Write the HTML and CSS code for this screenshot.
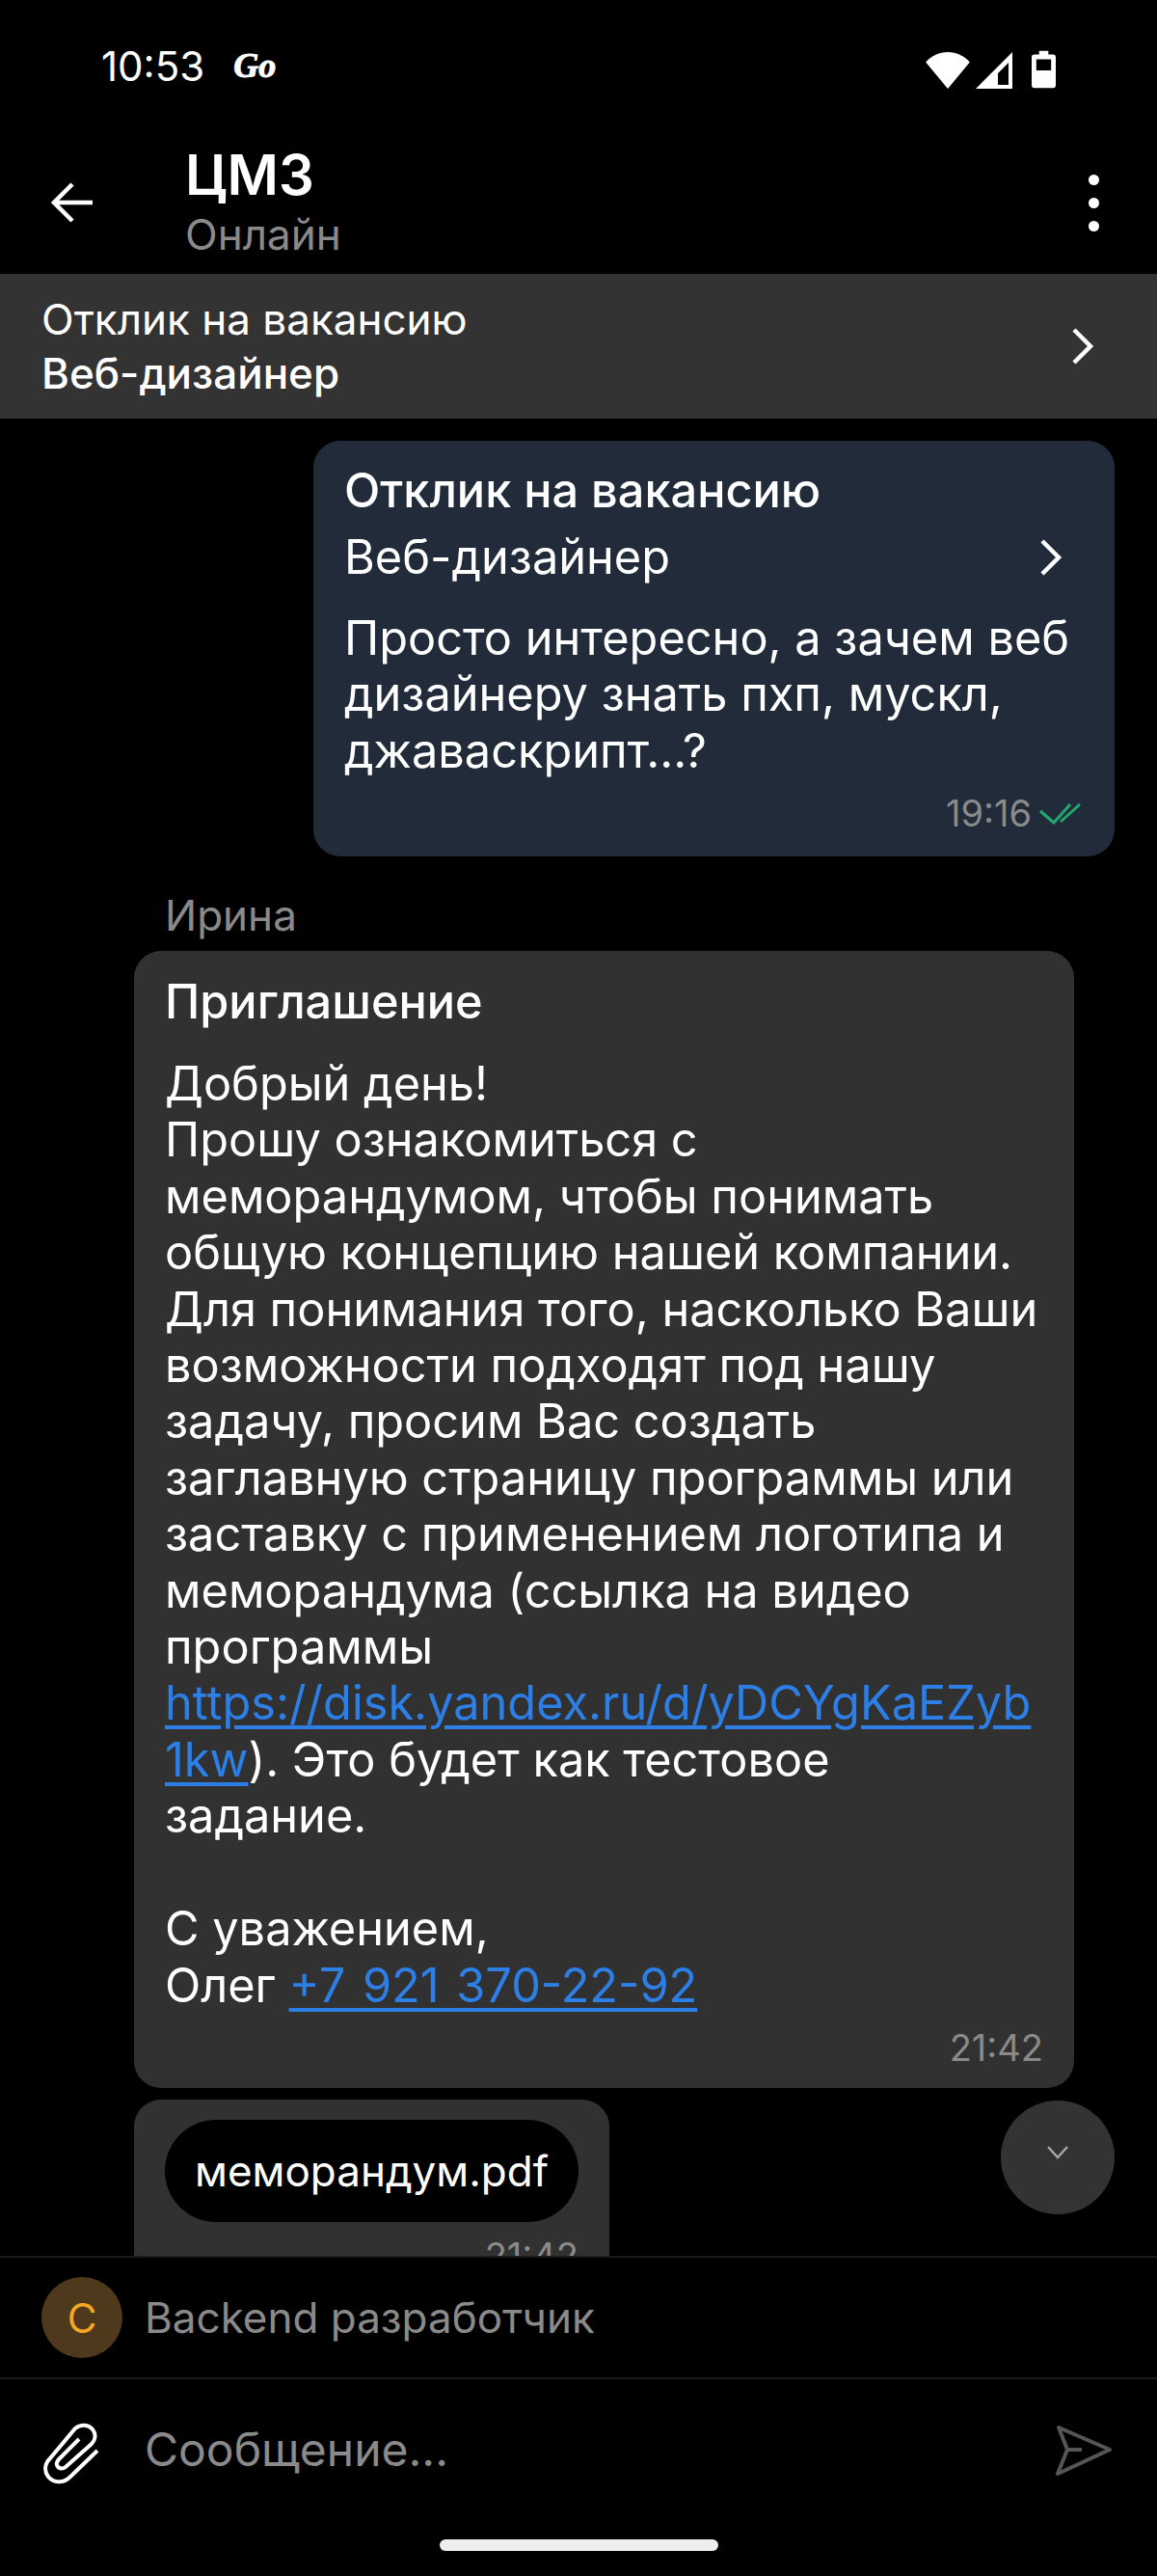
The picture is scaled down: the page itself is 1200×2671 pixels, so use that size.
FILE: index.html
```html
<!DOCTYPE html>
<html lang="ru">
<head>
    <meta charset="UTF-8">
    <meta name="viewport" content="width=device-width, initial-scale=1.0">
    <title>ЦМЗ</title>
    <link rel="stylesheet" href="styles.css">
</head>
<body>
    <div class="status-bar">
        <div class="status-left">
            <span class="status-time">10:53</span>
            <span class="status-go">Go</span>
        </div>
        <div class="status-icons">
            <svg class="icon-wifi" viewBox="0 0 48 40"><path d="M0 11C6 4 15 0 24 0s18 4 24 11L24 40z" fill="#fff"/></svg>
            <svg class="icon-signal" viewBox="0 0 38 38"><path fill-rule="evenodd" d="M38 0v38H0zM34 11 23 22v12h11z" fill="#fff"/></svg>
            <svg class="icon-battery" viewBox="0 0 26 40"><path fill-rule="evenodd" d="M8 0h10v4h5a3 3 0 0 1 3 3v30a3 3 0 0 1-3 3H3a3 3 0 0 1-3-3V7a3 3 0 0 1 3-3h5zM5 9v12h16V9z" fill="#fff"/></svg>
        </div>
    </div>

    <header class="top-bar">
        <svg class="icon-back" viewBox="0 0 44 44"><path d="M44 22H4M23 3 4 22l19 19" fill="none" stroke="#fff" stroke-width="4.5"/></svg>
        <div class="top-titles">
            <div class="top-name">ЦМЗ</div>
            <div class="top-online">Онлайн</div>
        </div>
        <div class="dots"><i></i><i></i><i></i></div>
    </header>

    <div class="vacancy-bar">
        <div>
            <div class="vacancy-line">Отклик на вакансию</div>
            <div class="vacancy-line vacancy-name">Веб-дизайнер</div>
        </div>
        <svg class="icon-chevron" viewBox="0 0 24 40"><path d="M3 3l17 17L3 37" fill="none" stroke="#fff" stroke-width="4.5"/></svg>
    </div>

    <main class="chat">
        <div class="bubble bubble-out">
            <div class="bubble-title">Отклик на вакансию</div>
            <div class="bubble-job">
                <span>Веб-дизайнер</span>
                <svg class="icon-chevron-small" viewBox="0 0 24 40"><path d="M3 3l17 17L3 37" fill="none" stroke="#fff" stroke-width="4.5"/></svg>
            </div>
            <div class="bubble-text">Просто интересно, а зачем веб дизайнеру знать пхп, мускл, джаваскрипт...?</div>
            <div class="bubble-meta meta-read">
                <span>19:16</span>
                <svg class="icon-read" viewBox="0 0 44 24"><path d="M1 10l14 12L32 3M22 21 42 3" fill="none" stroke="#1fa971" stroke-width="3"/></svg>
            </div>
        </div>

        <div class="sender">Ирина</div>
        <div class="bubble bubble-in">
            <div class="bubble-title">Приглашение</div>
            <div class="bubble-text invite-text">Добрый день!<br>Прошу ознакомиться с меморандумом, чтобы понимать общую концепцию нашей компании. Для понимания того, насколько Ваши возможности подходят под нашу задачу, просим Вас создать заглавную страницу программы или заставку с применением логотипа и меморандума (ссылка на видео программы <a href="#">https://disk.yandex.ru/d/yDCYgKaEZyb1kw</a>). Это будет как тестовое задание.<br><br>С уважением,<br>Олег <a class="phone" href="#">+7 921 370-22-92</a></div>
            <div class="bubble-meta"><span>21:42</span></div>
        </div>

        <div class="bubble bubble-file">
            <div class="file-pill">меморандум.pdf</div>
            <div class="bubble-meta"><span>21:42</span></div>
        </div>

        <div class="scroll-down">
            <svg viewBox="0 0 24 16"><path d="M2 2l10 11L22 2" fill="none" stroke="#a8a8a8" stroke-width="2.4"/></svg>
        </div>
    </main>

    <div class="resume-row">
        <div class="avatar">C</div>
        <span>Backend разработчик</span>
    </div>

    <footer class="composer">
        <svg class="icon-clip" viewBox="0 0 90 90"><path d="M71 43 43 70C35 78 25 76 20 70 15 63 17 56 22 51L48 20C54 15 62 16 66 21 70 26 69 32 65 36L38 60C34 63 30 61 29 58 28 55 30 53 32 51L52 31" fill="none" stroke="#fff" stroke-width="4"/></svg>
        <span class="composer-input">Сообщение...</span>
        <svg class="icon-send" viewBox="0 0 90 90"><path d="M18 19 71 42 17 67 27 42zM27 42H42" fill="none" stroke="#555" stroke-width="4" stroke-linejoin="round"/></svg>
    </footer>
    <div class="home-indicator"></div>
</body>
</html>
```

FILE: styles.css
```css
* {
    box-sizing: border-box;
}
body {
    margin: 0;
    width: 1200px;
    height: 2671px;
    display: flex;
    flex-direction: column;
    background-color: #000000;
    color: #ffffff;
    font-family: 'Inter', 'Liberation Sans', sans-serif;
    overflow: hidden;
}

/* status bar */
.status-bar {
    height: 136px;
    flex: none;
    display: flex;
    justify-content: space-between;
    align-items: flex-start;
    padding: 44px 105px 0 105px;
}
.status-left {
    display: flex;
    align-items: center;
    gap: 30px;
    height: 48px;
}
.status-time {
    font-size: 42px;
}
.status-go {
    font-family: 'Liberation Serif', serif;
    font-style: italic;
    font-weight: 700;
    font-size: 36px;
    -webkit-text-stroke: 1px #ffffff;
}
.status-icons {
    display: flex;
    align-items: flex-end;
    gap: 6px;
    height: 44px;
    margin-top: 4px;
}
.icon-wifi {
    width: 46px;
    height: 38px;
}
.icon-signal {
    width: 38px;
    height: 38px;
}
.icon-battery {
    width: 25px;
    height: 40px;
    margin-left: 14px;
}

/* top bar */
.top-bar {
    height: 148px;
    flex: none;
    display: flex;
    align-items: center;
    padding: 0 60px 0 52px;
}
.icon-back {
    width: 44px;
    height: 44px;
    flex: none;
}
.top-titles {
    flex: 1;
    margin-left: 96px;
    margin-top: -4px;
}
.top-name {
    font-size: 58px;
    font-weight: 600;
    line-height: 70px;
}
.top-online {
    font-size: 44px;
    line-height: 54px;
    color: #8a8a8a;
}
.dots {
    display: flex;
    flex-direction: column;
    gap: 13px;
}
.dots i {
    width: 11px;
    height: 11px;
    border-radius: 50%;
    background-color: #ffffff;
}

/* vacancy bar */
.vacancy-bar {
    height: 150px;
    flex: none;
    display: flex;
    justify-content: space-between;
    align-items: center;
    padding: 0 65px 0 43px;
    background-color: #333333;
}
.vacancy-line {
    font-size: 44px;
    line-height: 56px;
}
.vacancy-name {
    font-weight: 500;
}
.icon-chevron {
    width: 24px;
    height: 40px;
}

/* chat */
.chat {
    position: relative;
    flex: 1;
    min-height: 0;
    overflow: hidden;
    padding-top: 23px;
}
.bubble {
    border-radius: 28px;
}
.bubble-out {
    width: 831px;
    height: 431px;
    margin-left: 325px;
    padding: 23px 32px 0;
    background-color: #212b3a;
}
.bubble-title {
    font-size: 48.7px;
    font-weight: 500;
    line-height: 58px;
}
.bubble-job {
    display: flex;
    justify-content: space-between;
    align-items: center;
    margin-top: 11px;
    font-size: 48.7px;
    line-height: 58px;
    padding-right: 22px;
}
.icon-chevron-small {
    width: 24px;
    height: 40px;
}
.bubble-text {
    margin-top: 26px;
    font-size: 48.7px;
    line-height: 58.4px;
    overflow-wrap: anywhere;
}
.bubble-meta {
    display: flex;
    justify-content: flex-end;
    align-items: center;
    gap: 8px;
    margin-top: 13px;
    font-size: 38px;
    line-height: 44px;
    color: #8a8a8a;
}
.meta-read {
    padding-right: 2px;
}
.icon-read {
    width: 44px;
    height: 24px;
}
.sender {
    margin: 35px 0 0 171px;
    font-size: 44px;
    line-height: 52px;
    color: #8a8a8a;
}
.bubble-in {
    width: 975px;
    height: 1179px;
    margin: 11px 0 0 139px;
    padding: 24px 32px 0;
    background-color: #313131;
}
.invite-text {
    margin-top: 27px;
}
.invite-text a {
    color: #2d7fe6;
    text-decoration: underline;
    text-underline-offset: 6px;
}
.invite-text .phone {
    word-spacing: 4px;
}
.bubble-file {
    width: 493px;
    margin: 12px 0 0 139px;
    padding: 21px 32px 0;
    background-color: #313131;
    height: 240px;
}
.file-pill {
    height: 106px;
    display: flex;
    align-items: center;
    justify-content: center;
    border-radius: 53px;
    background-color: #000000;
    font-size: 44px;
}
.scroll-down {
    position: absolute;
    left: 1038px;
    top: 1744px;
    width: 118px;
    height: 118px;
    display: flex;
    align-items: center;
    justify-content: center;
    border-radius: 50%;
    background-color: #333333;
}
.scroll-down svg {
    width: 24px;
    height: 16px;
    margin-top: -10px;
}

/* bottom */
.resume-row {
    height: 128px;
    flex: none;
    display: flex;
    align-items: center;
    gap: 23px;
    padding-left: 43px;
    border-top: 2px solid #1c1c1c;
    border-bottom: 2px solid #1c1c1c;
    font-size: 44px;
    color: #8a8a8a;
}
.avatar {
    width: 84px;
    height: 84px;
    display: flex;
    align-items: center;
    justify-content: center;
    border-radius: 50%;
    background-color: #4f391c;
    color: #f5a623;
    font-size: 42px;
}
.composer {
    height: 151px;
    flex: none;
    display: flex;
    align-items: center;
    padding: 0 30px;
}
.icon-clip {
    width: 90px;
    height: 90px;
    flex: none;
}
.composer-input {
    flex: 1;
    margin: -6px 0 0 30px;
    font-size: 48px;
    color: #8a8a8a;
}
.icon-send {
    width: 90px;
    height: 90px;
    flex: none;
}
.home-indicator {
    width: 289px;
    height: 12px;
    flex: none;
    margin: 15px auto 26px;
    border-radius: 6px;
    background-color: #eeeeee;
}
```
